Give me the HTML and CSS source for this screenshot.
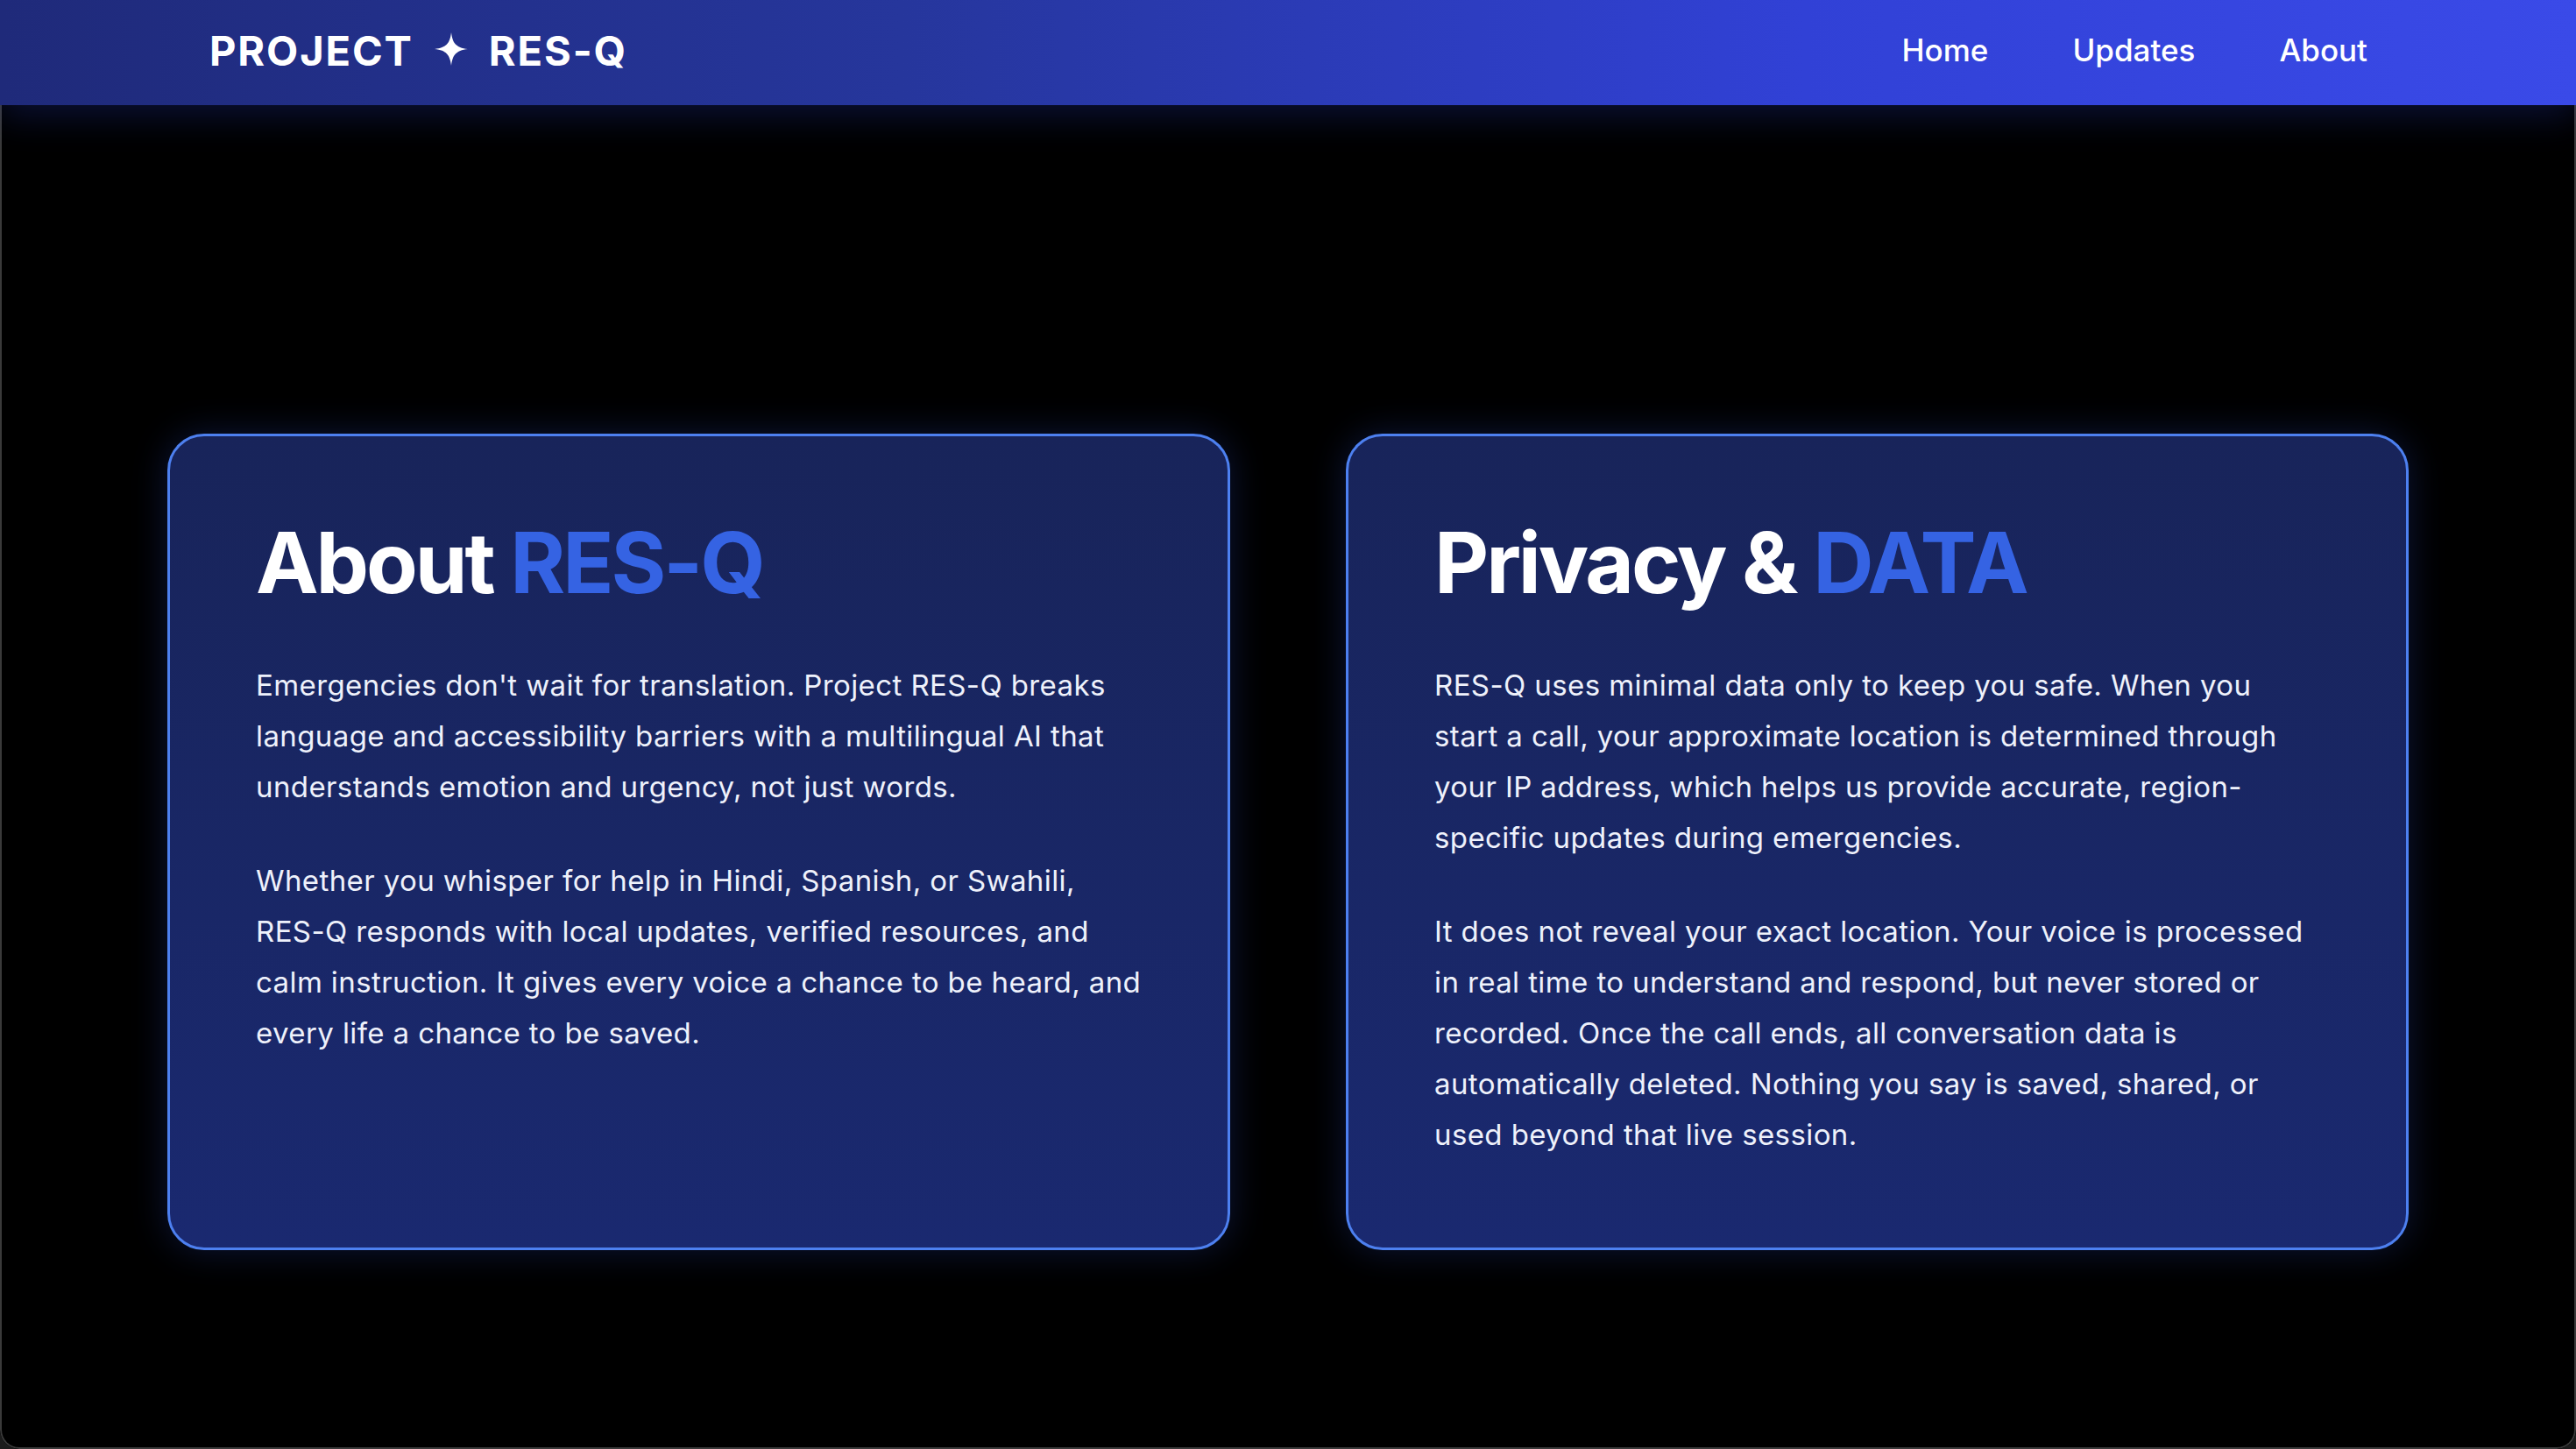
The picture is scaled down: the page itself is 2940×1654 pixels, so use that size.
FILE: index.html
```html
<!DOCTYPE html>
<html lang="en">
<head>
<meta charset="utf-8">
<title>Project RES-Q — About</title>
<link rel="stylesheet" href="styles.css">
</head>
<body>
<div class="window">
  <header class="navbar">
    <div class="nav-inner">
      <div class="logo">
        <span>PROJECT</span>
        <svg class="star" viewBox="0 0 40 40" width="38" height="38" aria-hidden="true"><path d="M20 0 C21.5 12 25 18.5 40 20 C25 21.5 21.5 28 20 40 C18.5 28 15 21.5 0 20 C15 18.5 18.5 12 20 0 Z" fill="#ffffff"/></svg>
        <span>RES-Q</span>
      </div>
      <nav class="links">
        <a href="#">Home</a>
        <a href="#">Updates</a>
        <a href="#">About</a>
      </nav>
    </div>
  </header>
  <main class="main">
    <section class="card">
      <h1 class="title">About <span class="accent">RES-Q</span></h1>
      <p>Emergencies don't wait for translation. Project RES-Q breaks language and accessibility barriers with a multilingual AI that understands emotion and urgency, not just words.</p>
      <p>Whether you whisper for help in Hindi, Spanish, or Swahili, RES-Q responds with local updates, verified resources, and calm instruction. It gives every voice a chance to be heard, and every life a chance to be saved.</p>
    </section>
    <section class="card">
      <h1 class="title">Privacy &amp; <span class="accent">DATA</span></h1>
      <p>RES-Q uses minimal data only to keep you safe. When you start a call, your approximate location is determined through your IP address, which helps us provide accurate, region-specific updates during emergencies.</p>
      <p>It does not reveal your exact location. Your voice is processed in real time to understand and respond, but never stored or recorded. Once the call ends, all conversation data is automatically deleted. Nothing you say is saved, shared, or used beyond that live session.</p>
    </section>
  </main>
</div>
</body>
</html>
```

FILE: styles.css
```css
* { box-sizing: border-box; }

html, body {
  margin: 0;
  padding: 0;
  background: #1c1c1c;
}

body {
  font-family: Inter, "Noto Sans", "Liberation Sans", sans-serif;
  color: #ffffff;
}

.window {
  position: relative;
  width: 2940px;
  height: 1654px;
  background: #000000;
  border-radius: 0 0 22px 22px;
  overflow: hidden;
}

.window::after {
  content: "";
  position: absolute;
  inset: 0;
  border: 2px solid #3a3a3a;
  border-top: none;
  border-radius: 0 0 22px 22px;
  pointer-events: none;
}

.navbar {
  position: relative;
  z-index: 2;
  height: 120px;
  background: linear-gradient(90deg, #1f2a7a 0%, #26369c 35%, #3141d6 70%, #3a4ae8 100%);
  box-shadow: 0 12px 40px rgba(40, 60, 190, 0.28);
}

.nav-inner {
  height: 100%;
  padding: 0 238px 6px 239px;
  display: flex;
  align-items: center;
  justify-content: space-between;
}

.logo {
  display: flex;
  align-items: center;
  gap: 24px;
  font-weight: 700;
  font-size: 47px;
  letter-spacing: 0.04em;
}

.star {
  display: block;
  width: 38px;
  height: 38px;
  margin: 0 0 2px 0;
}

.links {
  display: flex;
  align-items: center;
  gap: 96px;
}

.links a {
  color: #ffffff;
  text-decoration: none;
  font-size: 35px;
  font-weight: 500;
}

.main {
  padding: 375px 191px 0;
  display: grid;
  grid-template-columns: 1fr 1fr;
  gap: 132px;
}

.card {
  border: 3px solid #4d80f0;
  border-radius: 42px;
  background: linear-gradient(180deg, #18245a 0%, #1a2970 100%);
  box-shadow: 0 0 40px rgba(60, 100, 255, 0.22);
  padding: 87px 98px 100px;
}

.title {
  margin: 0 0 53px;
  font-size: 96px;
  line-height: 1.2;
  font-weight: 700;
  letter-spacing: -0.032em;
  color: #ffffff;
}

.accent {
  color: #3563e3;
}

.card p {
  margin: 0 0 49px;
  font-size: 33px;
  line-height: 58px;
  letter-spacing: 0.012em;
  color: #eef1fb;
}

.card p:last-child {
  margin-bottom: 0;
}
```
